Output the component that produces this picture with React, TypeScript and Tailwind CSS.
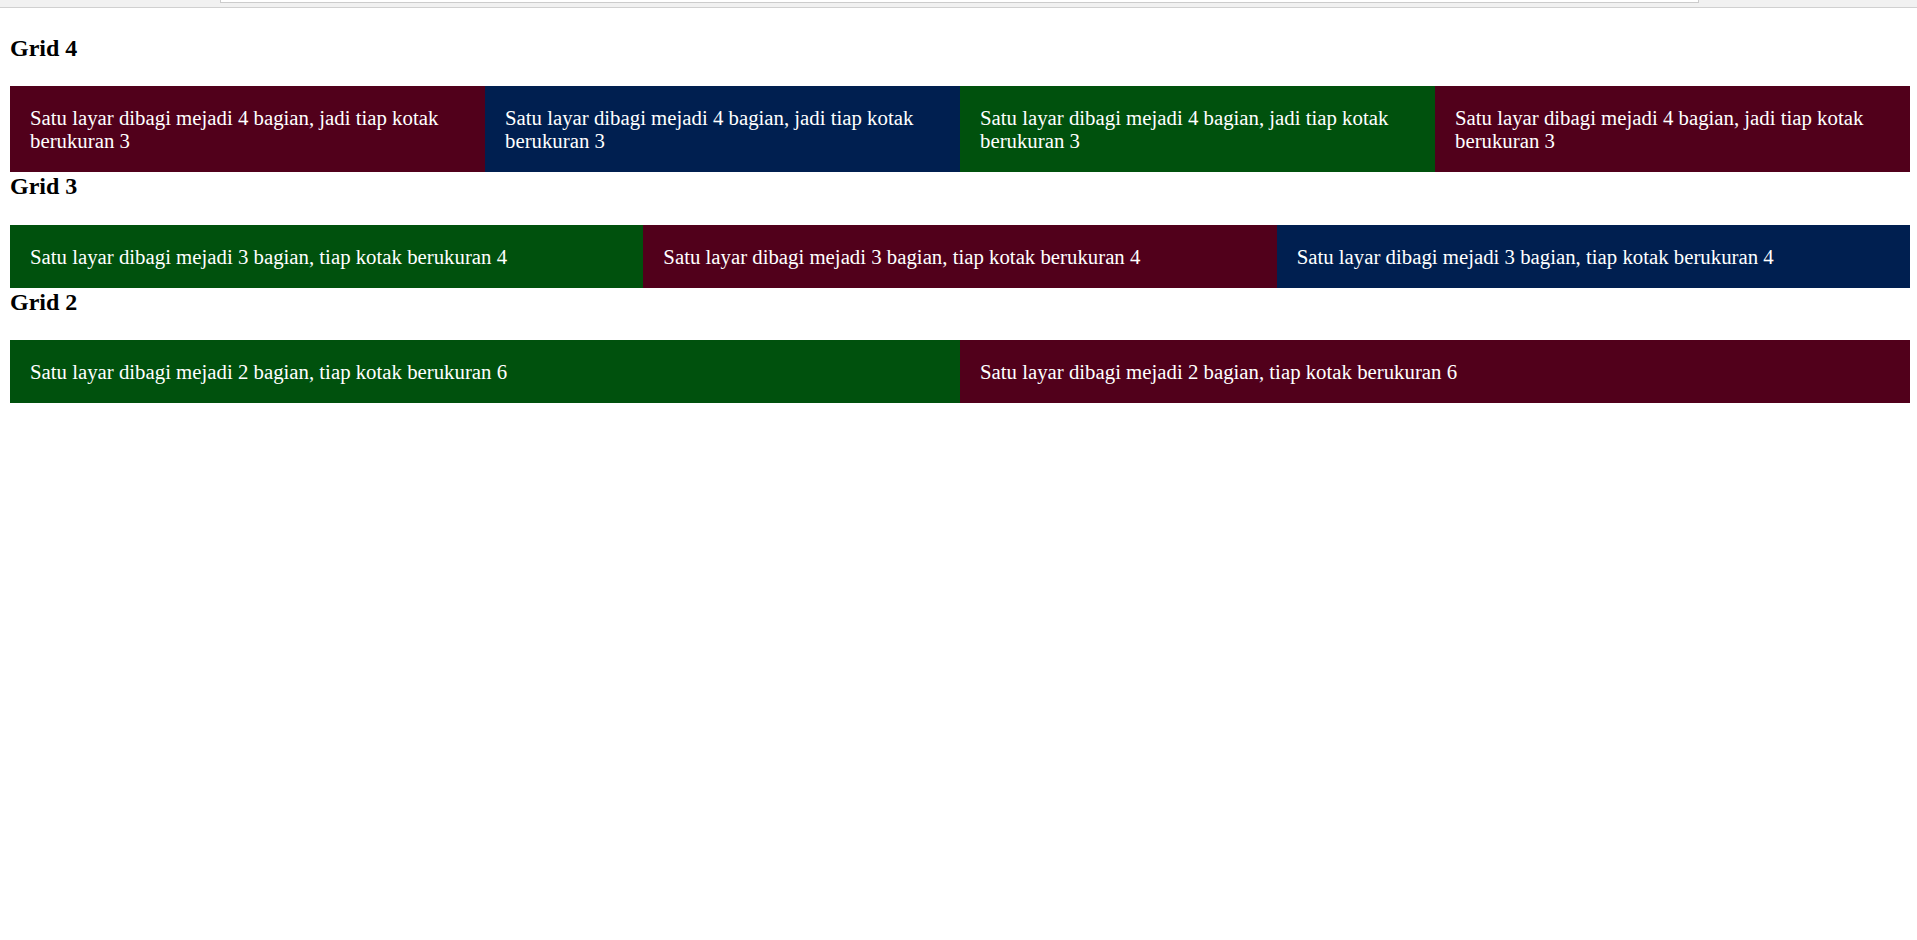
import React from "react";

type Box = { text: string; color: string };

const MAROON = "bg-[#51001b]";
const NAVY = "bg-[#001f50]";
const GREEN = "bg-[#00510d]";

const grid4: Box[] = [
  { text: "Satu layar dibagi mejadi 4 bagian, jadi tiap kotak berukuran 3", color: MAROON },
  { text: "Satu layar dibagi mejadi 4 bagian, jadi tiap kotak berukuran 3", color: NAVY },
  { text: "Satu layar dibagi mejadi 4 bagian, jadi tiap kotak berukuran 3", color: GREEN },
  { text: "Satu layar dibagi mejadi 4 bagian, jadi tiap kotak berukuran 3", color: MAROON },
];

const grid3: Box[] = [
  { text: "Satu layar dibagi mejadi 3 bagian, tiap kotak berukuran 4", color: GREEN },
  { text: "Satu layar dibagi mejadi 3 bagian, tiap kotak berukuran 4", color: MAROON },
  { text: "Satu layar dibagi mejadi 3 bagian, tiap kotak berukuran 4", color: NAVY },
];

const grid2: Box[] = [
  { text: "Satu layar dibagi mejadi 2 bagian, tiap kotak berukuran 6", color: GREEN },
  { text: "Satu layar dibagi mejadi 2 bagian, tiap kotak berukuran 6", color: MAROON },
];

function Cells({ boxes }: { boxes: Box[] }) {
  return (
    <>
      {boxes.map((b, i) => (
        <div key={i} className={`${b.color} p-5 text-[20.8px] leading-[23px] text-white`}>
          {b.text}
        </div>
      ))}
    </>
  );
}

export default function App() {
  return (
    <div className="min-h-screen bg-white text-black" style={{ fontFamily: '"Liberation Serif", "Times New Roman", serif' }}>
      {/* top strip from the browser chrome */}
      <div className="relative h-[8px] overflow-hidden border-b border-[#d0d0d0] bg-[#f1f1f1]">
        <div className="absolute left-[220px] top-[-10px] h-[13px] w-[1479px] border border-[#cccccc] bg-white" />
      </div>

      <div className="w-[1900px] pl-[10px] box-content">
        <h2 className="mt-[26px] mb-[24px] text-[24px] font-bold leading-[28px]">Grid 4</h2>
        <div className="grid grid-cols-4">
          <Cells boxes={grid4} />
        </div>

        <h2 className="mb-[25px] text-[24px] font-bold leading-[28px]">Grid 3</h2>
        <div className="grid grid-cols-3">
          <Cells boxes={grid3} />
        </div>

        <h2 className="mb-[24px] text-[24px] font-bold leading-[28px]">Grid 2</h2>
        <div className="grid grid-cols-2">
          <Cells boxes={grid2} />
        </div>
      </div>
    </div>
  );
}
